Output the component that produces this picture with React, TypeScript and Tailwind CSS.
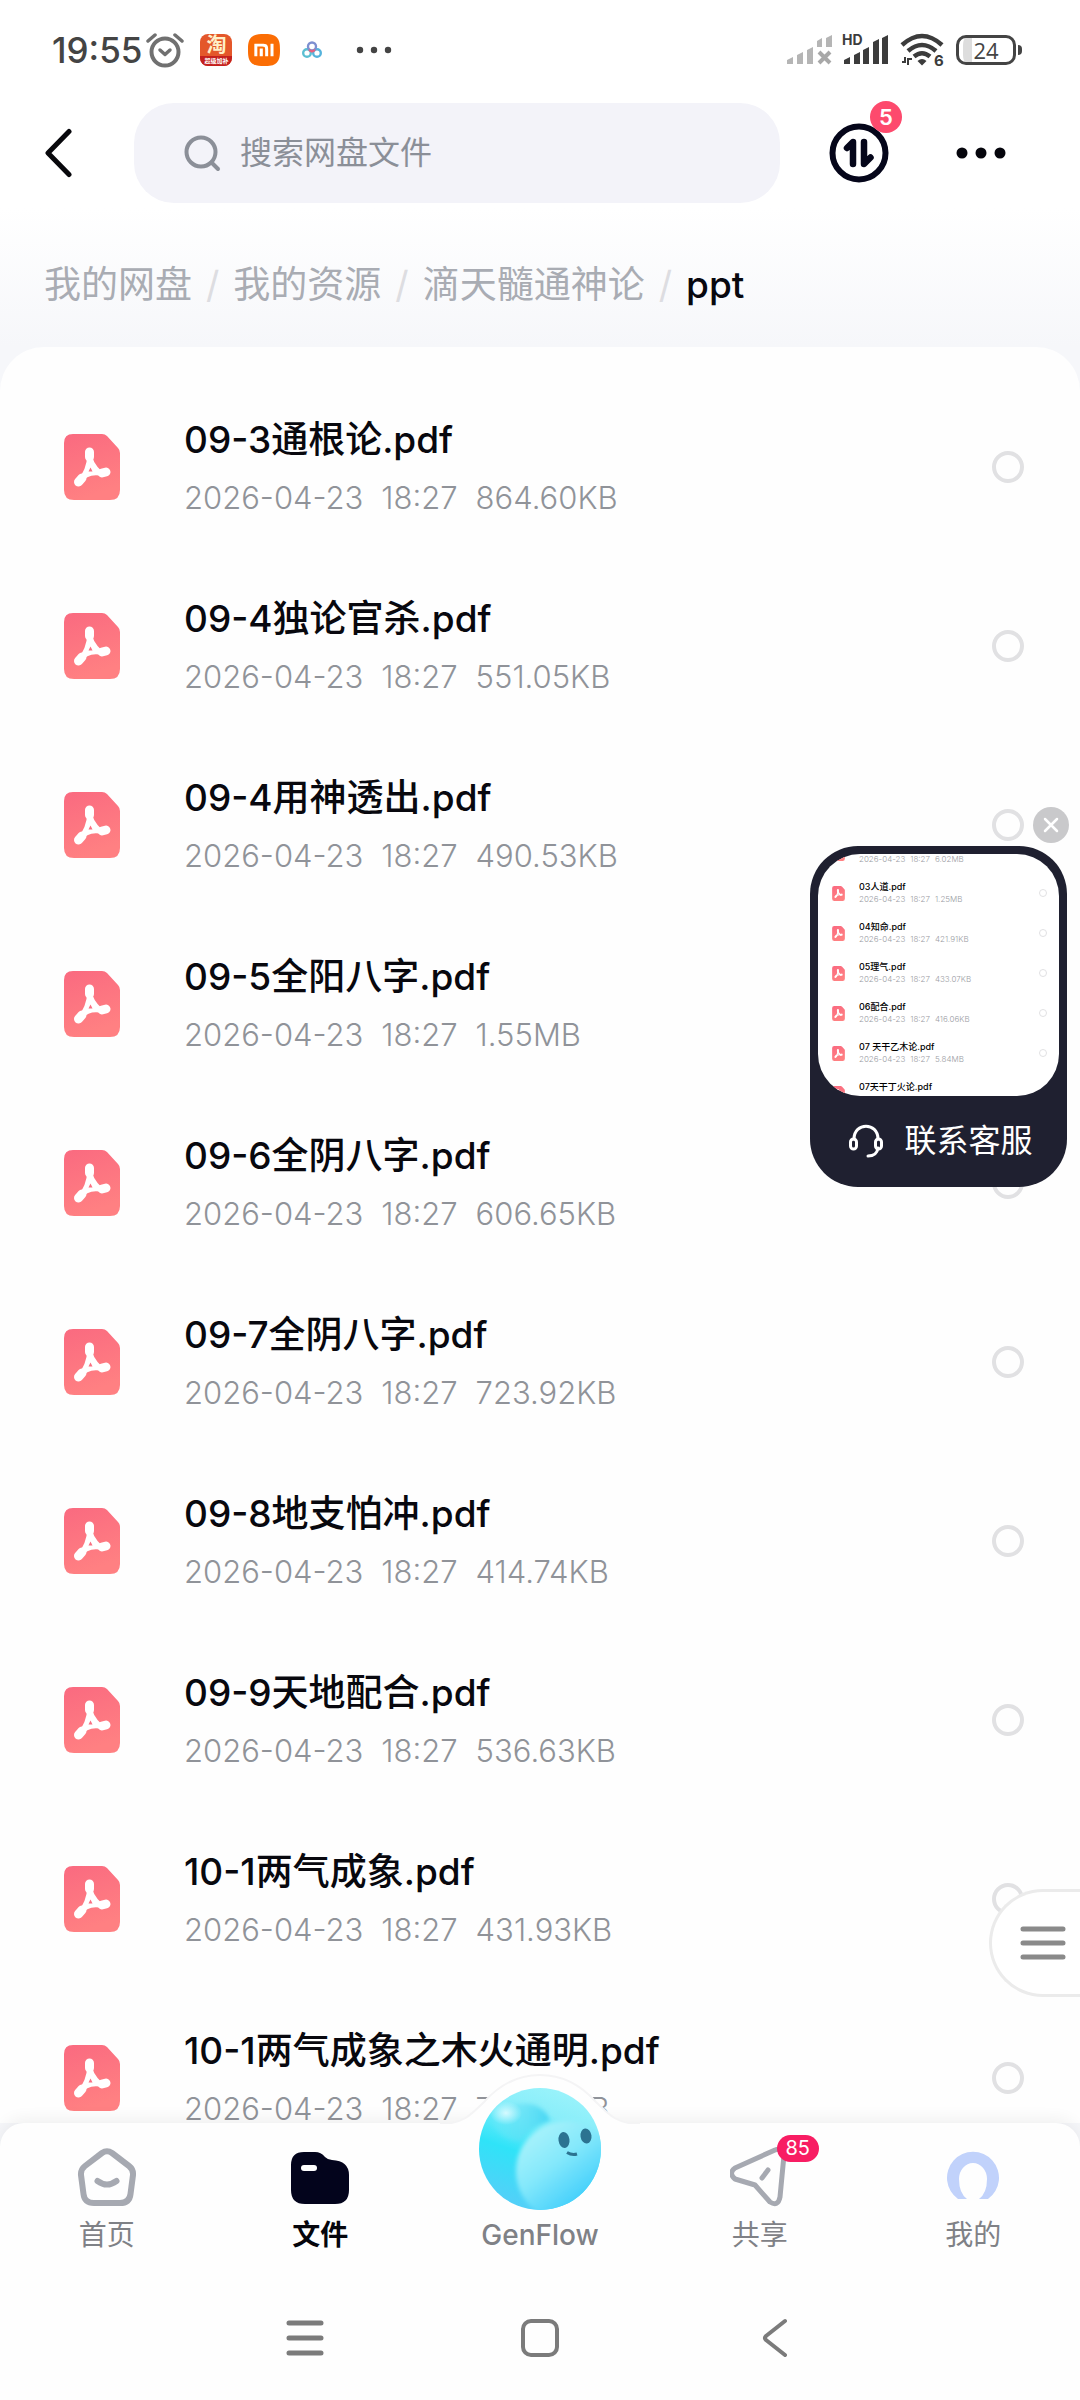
import { useState } from 'react'
import { SiXiaomi } from 'react-icons/si'

interface FileType {
    name : string
    size : string
}

const crumbs = ['我的网盘', '我的资源', '滴天髓通神论']

const files : FileType[] = [
    { name: '09-3通根论.pdf', size: '864.60KB' },
    { name: '09-4独论官杀.pdf', size: '551.05KB' },
    { name: '09-4用神透出.pdf', size: '490.53KB' },
    { name: '09-5全阳八字.pdf', size: '1.55MB' },
    { name: '09-6全阴八字.pdf', size: '606.65KB' },
    { name: '09-7全阴八字.pdf', size: '723.92KB' },
    { name: '09-8地支怕冲.pdf', size: '414.74KB' },
    { name: '09-9天地配合.pdf', size: '536.63KB' },
    { name: '10-1两气成象.pdf', size: '431.93KB' },
    { name: '10-1两气成象之木火通明.pdf', size: '712.36KB' },
]

const previewFiles : FileType[] = [
    { name: '02地道.pdf', size: '6.02MB' },
    { name: '03人道.pdf', size: '1.25MB' },
    { name: '04知命.pdf', size: '421.91KB' },
    { name: '05理气.pdf', size: '433.07KB' },
    { name: '06配合.pdf', size: '416.06KB' },
    { name: '07 天干乙木论.pdf', size: '5.84MB' },
    { name: '07天干丁火论.pdf', size: '5.12MB' },
]

function PdfIcon({ className } : { className : string }) {
    return (
        <svg viewBox="0 0 56 66" className={className} aria-hidden="true">
            <defs>
                <linearGradient id="pdf" x1="0" y1="0" x2="0.3" y2="1">
                    <stop offset="0" stopColor="#fa6a80" />
                    <stop offset="1" stopColor="#ff8082" />
                </linearGradient>
            </defs>
            <path d="M9 0H38Q41 0 43 2L54 14Q56 16 56 19V56Q56 66 46 66H10Q0 66 0 56V9Q0 0 9 0Z" fill="url(#pdf)" />
            <g fill="none" stroke="#fff" strokeLinecap="round" strokeLinejoin="round">
                <path d="M26 20Q25 29 36 39Q22 37 15 48Q25 38 26 20Z" strokeWidth="5" fill="#fff" />
                <path d="M25.500 18V23M14.500 48L18 44M38 39L42 38" strokeWidth="9" />
            </g>
            <path d="M26.500 33.500L28.500 37.500H24.500Z" fill="#fa6f80" />
        </svg>
    )
}

function StatusBar() {
    return (
        <div className="flex h-[100px] items-center justify-between pl-[52px] pr-[58px] text-[#444]">
            <div className="flex items-center">
                <span className="text-[35px] leading-10 font-medium">19:55</span>
                <svg viewBox="0 0 38 36" className="ml-1 h-9 w-[38px]" fill="none" stroke="#707070" strokeLinecap="round">
                    <circle cx="19" cy="20" r="13.500" strokeWidth="4" />
                    <path d="M2 9L9 3M36 9L29 3" strokeWidth="3.500" />
                    <path d="M14 18L19 22.500L24 18" strokeWidth="3.500" strokeLinejoin="round" />
                </svg>
                <div className="ml-4 h-8 w-8 overflow-hidden rounded-lg bg-[#e4572a] text-center text-white">
                    <div className="text-[20px] leading-[22px] font-bold text-[#fff0c8]">淘</div>
                    <div className="bg-[#c4201d] text-[6px] leading-[10px] font-bold">超级加补</div>
                </div>
                <SiXiaomi className="ml-4 h-8 w-8 text-[#fb6d04]" />
                <svg viewBox="0 0 20 18" className="ml-[22px] h-[18px] w-5" fill="none" strokeWidth="2.400">
                    <circle cx="5" cy="12" r="3.800" stroke="#5bbfd2" />
                    <circle cx="15" cy="12" r="3.800" stroke="#55b3dc" />
                    <circle cx="10" cy="5.500" r="4" stroke="#7d8fd0" />
                    <path d="M7 9L10 10.500L13 9" stroke="#e8607f" />
                </svg>
                <svg viewBox="0 0 36 8" className="ml-[34px] h-2 w-9" fill="#444">
                    <circle cx="4" cy="4" r="3.200" /><circle cx="18" cy="4" r="3.200" /><circle cx="32" cy="4" r="3.200" />
                </svg>
            </div>

            <div className="flex items-center">
                {/* 무신호 심 */}
                <svg viewBox="0 0 45 30" className="h-[30px] w-[45px]" fill="#b5b5b5">
                    <path d="M0 25L6 22V29H0ZM10 20L16 17V29H10ZM20 15L26 12V29H20ZM30 6L35 3V12H30ZM39 3L45 0V12H39Z" />
                    <path d="M32 17L43 28M43 17L32 28" stroke="#a8a8a8" strokeWidth="4" />
                </svg>
                <svg viewBox="0 0 46 30" className="ml-[10px] h-[30px] w-[46px] overflow-visible" fill="#3c3c3c">
                    <path d="M2 25L8 22V29H2ZM12 20L18 17V29H12ZM21 15L27 12V29H21ZM31 7L37 4V29H31ZM40 3L46 0V29H40Z" />
                    <text x="0" y="10" fontSize="14" fontWeight="700">HD</text>
                </svg>
                <svg viewBox="0 0 44 34" className="ml-3 h-[34px] w-11 overflow-visible" fill="none" stroke="#3c3c3c" strokeWidth="4.500">
                    <path d="M2 12Q22 -6 42 12M8 18Q22 6 36 18M14 23.500Q22 17 30 23.500" />
                    <path d="M17.500 28Q22 24 26.500 28L22 32.500Z" fill="#3c3c3c" stroke="none" />
                    <path d="M2 29H5V24M8 32V26H12" strokeWidth="2" />
                    <text x="34" y="33" fontSize="15" fontWeight="700" fill="#3c3c3c" stroke="none">6</text>
                </svg>
                <div className="ml-3 flex h-[30px] w-[60px] items-center justify-center rounded-[10px] border-[3px] border-[#444] bg-linear-to-r from-[#ddd] from-25% to-white to-25% bg-clip-content px-1">
                    <span className="font-['Open_Sans'] text-[22px] leading-6">24</span>
                </div>
                <div className="ml-[2px] h-[10px] w-1 rounded-r bg-[#444]"></div>
            </div>
        </div>
    )
}

function TopBar() {
    return (
        <div className="flex h-[106px] items-center">
            <button type="button" aria-label="返回" className="flex w-[134px] shrink-0 pl-11">
                <svg viewBox="0 0 28 50" className="h-[50px] w-7" fill="none" stroke="#08080c" strokeWidth="5" strokeLinecap="round" strokeLinejoin="round">
                    <path d="M25 3.500L4 25L25 46.500" />
                </svg>
            </button>
            <label className="flex h-[100px] min-w-0 grow items-center gap-[18px] rounded-[40px] bg-[#f3f3f9] pl-[50px]">
                <svg viewBox="0 0 38 38" className="h-[38px] w-[38px] shrink-0" fill="none" stroke="#8b8f98" strokeWidth="4" strokeLinecap="round">
                    <circle cx="17" cy="18" r="14.500" />
                    <path d="M27.500 28.500L34 35" />
                </svg>
                <input type="text" aria-label="搜索网盘文件" placeholder="搜索网盘文件" className="min-w-0 grow bg-transparent text-[32px] leading-10 outline-none placeholder:text-[#8b8f98]" />
            </label>
            <button type="button" aria-label="传输列表" className="relative ml-[49px] shrink-0">
                <svg viewBox="0 0 60 60" className="h-[60px] w-[60px]" fill="none" stroke="#05061a">
                    <circle cx="30" cy="30" r="26.500" strokeWidth="6" />
                    <path d="M24 41V19L18 25M35 19V41L41.500 34.500" strokeWidth="6.500" strokeLinecap="round" strokeLinejoin="round" />
                </svg>
                <span className="absolute -top-[22px] -right-[13px] h-8 w-8 rounded-full bg-[#fd4a6d] text-center text-[22px] leading-8 font-semibold text-white">5</span>
            </button>
            <button type="button" aria-label="更多" className="mr-[74px] ml-[67px] shrink-0">
                <svg viewBox="0 0 50 12" className="h-3 w-[50px]" fill="#05050c">
                    <circle cx="6" cy="6" r="5.500" /><circle cx="25" cy="6" r="5.500" /><circle cx="44" cy="6" r="5.500" />
                </svg>
            </button>
        </div>
    )
}

function FileRow({ file } : { file : FileType }) {
    return (
        <li>
            <label className="flex h-[179px] items-center pr-14 pl-16">
                <PdfIcon className="h-[66px] w-14 shrink-0" />
                <div className="ml-16 grow pt-1">
                    <div className="text-[37px] leading-[58px] font-medium text-[#08080e]">{ file.name }</div>
                    <div className="flex gap-[18px] text-[31px] leading-[58px] font-light text-[#909399]">
                        <span>2026-04-23</span>
                        <span>18:27</span>
                        <span>{ file.size }</span>
                    </div>
                </div>
                <input type="checkbox" aria-label={ file.name } className="h-8 w-8 shrink-0 appearance-none rounded-full border-4 border-[#e1e1e3] checked:bg-[#fa6a80]" />
            </label>
        </li>
    )
}

/* 고객센터 플로팅 카드 */
function ServiceCard({ onClose } : { onClose : () => void }) {
    return (
        <div className="absolute top-[807px] right-[13px] w-[257px]">
            <button type="button" aria-label="关闭" onClick={ onClose } className="ml-auto mr-[-2px] block h-9 w-9 rounded-full bg-[#c9c9cb] p-[10px]">
                <svg viewBox="0 0 16 16" className="h-4 w-4" stroke="#fff" strokeWidth="2.500" strokeLinecap="round">
                    <path d="M2 2L14 14M14 2L2 14" />
                </svg>
            </button>
            <div className="mt-[3px] rounded-[48px] bg-[#1f2030] p-2">
                <ul className="flex h-[242px] flex-col justify-center overflow-hidden rounded-[42px] bg-white pb-1">
                    {previewFiles.map((file) => (
                        <li key={file.name} className="flex h-10 shrink-0 items-center pr-3 pl-[14px]">
                            <PdfIcon className="h-[15px] w-[13px]" />
                            <div className="ml-[14px] grow">
                                <div className="text-[9px] leading-[13px] font-medium text-black">{ file.name }</div>
                                <div className="flex gap-[5px] text-[8px] leading-[13px] font-light text-[#9a9da3]">
                                    <span>2026-04-23</span>
                                    <span>18:27</span>
                                    <span>{ file.size }</span>
                                </div>
                            </div>
                            <span className="h-2 w-2 rounded-full border border-[#e1e1e3]"></span>
                        </li>
                    ))}
                </ul>
                <button type="button" className="flex h-[83px] w-full items-center justify-center gap-5 pt-[6px] pl-1 text-[32px] leading-10 text-white">
                    <svg viewBox="0 0 36 36" className="h-9 w-9" fill="none" stroke="#fff" strokeWidth="3" strokeLinecap="round">
                        <path d="M6 16C6 -1 30 -1 30 16M30 25C29 31 26 33 20 33" />
                        <rect x="2.500" y="16" width="6" height="10" rx="3" />
                        <rect x="27.500" y="16" width="6" height="10" rx="3" />
                    </svg>
                    联系客服
                </button>
            </div>
        </div>
    )
}

function GenFlowBall() {
    return (
        <svg viewBox="0 0 124 124" className="h-[124px] w-[124px]" aria-hidden="true">
            <defs>
                <linearGradient id="ball" x1="0.75" y1="0" x2="0.4" y2="1">
                    <stop offset="0" stopColor="#9df4fb" />
                    <stop offset="0.25" stopColor="#8aeefa" />
                    <stop offset="0.6" stopColor="#2fe3f8" />
                    <stop offset="1" stopColor="#55cff8" />
                </linearGradient>
                <linearGradient id="face" x1="0.15" y1="0.1" x2="0.7" y2="0.8">
                    <stop offset="0" stopColor="#a9f3fb" />
                    <stop offset="0.45" stopColor="#84e8fb" />
                    <stop offset="1" stopColor="#3dcdfb" />
                </linearGradient>
                <radialGradient id="shine">
                    <stop offset="0" stopColor="#d5faff" />
                    <stop offset="1" stopColor="#d5faff" stopOpacity="0" />
                </radialGradient>
                <linearGradient id="wave" x1="0" y1="0" x2="1" y2="0">
                    <stop offset="0" stopColor="#7fe9f8" stopOpacity="0.200" />
                    <stop offset="1" stopColor="#45d6f3" />
                </linearGradient>
                <filter id="soft"><feGaussianBlur stdDeviation="2" /></filter>
                <clipPath id="round"><circle cx="62" cy="62" r="61" /></clipPath>
            </defs>
            <g clipPath="url(#round)">
                <rect width="124" height="124" fill="url(#ball)" />
                <path d="M14 34C30 10 66 12 72 34C60 38 50 42 44 54C30 54 18 48 14 34Z" fill="url(#wave)" filter="url(#soft)" />
                <ellipse cx="28" cy="26" rx="16" ry="12" fill="url(#shine)" />
                <circle cx="88" cy="84" r="50" fill="url(#face)" filter="url(#soft)" />
            </g>
            <ellipse cx="86" cy="53" rx="5.500" ry="8" fill="#2c7391" transform="rotate(-8 86 53)" />
            <ellipse cx="108" cy="49" rx="5.500" ry="7.500" fill="#2c7391" transform="rotate(-8 108 49)" />
            <path d="M89 65.500Q94 68.500 99 67" stroke="#2c7391" strokeWidth="3" fill="none" />
        </svg>
    )
}

function TabBar() {
    return (
        <nav className="grid grid-cols-[1fr_1fr_226px_1fr_1fr] pt-6 pb-[21px] text-[28px] leading-10 text-[#7f8186]">
            <a href="#home" className="flex flex-col items-center gap-2">
                <svg viewBox="0 0 60 60" className="h-[60px] w-[60px]" fill="none" stroke="#a6a9b1" strokeWidth="6" strokeLinecap="round" strokeLinejoin="round">
                    <path d="M25 6Q30 2.500 35 6L52 19Q56.500 22.500 56 28L53.500 47Q52.500 56 43 56H17Q7.500 56 6.500 47L4 28Q3.500 22.500 8 19Z" />
                    <path d="M20.500 34Q30 41 39.500 34" />
                </svg>
                首页
            </a>
            <a href="#files" className="flex flex-col items-center gap-2 font-bold text-[#05050c]">
                <svg viewBox="0 0 60 60" className="h-[60px] w-[60px]">
                    <path d="M1 18Q1 5 14 5H25Q31 5 35 10Q38 13 42 13Q59 14 59 28V43Q59 57 45 57H15Q1 57 1 43Z" fill="#03041c" />
                    <rect x="11" y="18" width="16" height="6" rx="3" fill="#fff" />
                </svg>
                文件
            </a>
            <a href="#genflow" className="relative flex flex-col items-center pt-[68px] font-medium">
                <span className="absolute -top-[60px] left-1/2 -translate-x-1/2"><GenFlowBall /></span>
                GenFlow
            </a>
            <a href="#share" className="relative flex flex-col items-center gap-2">
                <svg viewBox="0 0 60 60" className="h-[60px] w-[60px]" fill="none" stroke="#a6a9b1" strokeWidth="5" strokeLinecap="round" strokeLinejoin="round">
                    <path d="M5 21L45 3Q54 0 54 8L50 50Q48 60 40 55L25 38L5 32Q-2 26 5 21Z" />
                    <path d="M32 31L38 23" />
                </svg>
                <span className="absolute -top-3 left-1/2 ml-[17px] h-[27px] w-[42px] rounded-full bg-[#f81d63] text-center text-[20px] leading-[27px] text-white">85</span>
                共享
            </a>
            <a href="#me" className="flex flex-col items-center gap-2">
                <svg viewBox="0 0 60 60" className="h-[60px] w-[60px]" aria-hidden="true">
                    <path d="M15 52A26 26 0 1 1 45 52H36Q44 46 44 32A14 16 0 0 0 16 32Q16 46 24 52Z" fill="#c1d2fb" />
                </svg>
                我的
            </a>
        </nav>
    )
}

function SystemNav() {
    return (
        <div className="flex h-[124px] items-center justify-center gap-[195px]">
            <button type="button" aria-label="最近任务">
                <svg viewBox="0 0 40 40" className="h-10 w-10" stroke="#7b7b7b" strokeWidth="5" strokeLinecap="round"><path d="M4 5H36M4 20H36M4 35H36" /></svg>
            </button>
            <button type="button" aria-label="主屏幕">
                <svg viewBox="0 0 40 40" className="h-10 w-10" fill="none" stroke="#7b7b7b" strokeWidth="4"><rect x="3" y="3" width="34" height="34" rx="8" /></svg>
            </button>
            <button type="button" aria-label="返回上一页">
                <svg viewBox="0 0 40 40" className="h-10 w-10" fill="none" stroke="#7b7b7b" strokeWidth="4" strokeLinecap="round" strokeLinejoin="round"><path d="M30 3L11 18Q9 20 11 22L30 37" /></svg>
            </button>
        </div>
    )
}

export default function App() {
    const [showService, setShowService] = useState(true)

    return (
        <div lang="zh-CN" className="relative flex h-screen flex-col overflow-hidden bg-[#f6f7fa] font-['Inter','Noto_Sans_CJK_SC',sans-serif]">
            <header className="bg-linear-to-b from-white from-60% to-[#f6f7fa]">
                <StatusBar />
                <TopBar />
                <div className="flex h-[141px] items-center pt-4 pl-11 text-[37px] leading-[50px]">
                    {crumbs.map((crumb) => (
                        <span key={crumb} className="flex items-center">
                            <a href="#files" className="text-[#a9acb3]">{ crumb }</a>
                            <span className="mx-[14px] text-[#dddde1]">/</span>
                        </span>
                    ))}
                    <span className="font-medium text-[#08080e]">ppt</span>
                </div>
            </header>

            {/* 파일 목록 */}
            <main className="min-h-0 grow overflow-hidden rounded-t-[44px] bg-[#fefefe] pt-[30px]">
                <ul>
                    {files.map((file) => <FileRow key={file.name} file={file} />)}
                </ul>
            </main>

            {showService && <ServiceCard onClose={ () => setShowService(false) } />}

            <button type="button" aria-label="菜单" className="absolute right-0 bottom-[403px] flex h-[108px] w-[91px] items-center rounded-l-full border-[3px] border-r-0 border-[#ebebeb] bg-white pl-7">
                <svg viewBox="0 0 46 34" className="h-[34px] w-[46px]" stroke="#8a8a8a" strokeWidth="5" strokeLinecap="round"><path d="M3 3H43M3 17H43M3 31H43" /></svg>
            </button>

            <footer className="relative rounded-t-3xl bg-[#fefefe] shadow-[0_-4px_16px_rgba(0,0,0,0.06)]">
                <svg viewBox="0 0 200 50" className="absolute -top-[49px] left-1/2 h-[50px] w-[200px] -translate-x-1/2" aria-hidden="true">
                    <path d="M0 50C22 50 30 42 44 28C60 10 78 1 100 1C122 1 140 10 156 28C170 42 178 50 200 50" fill="#fefefe" stroke="#f4f4f5" strokeWidth="2" />
                </svg>
                <TabBar />
                <SystemNav />
            </footer>
        </div>
    )
}
